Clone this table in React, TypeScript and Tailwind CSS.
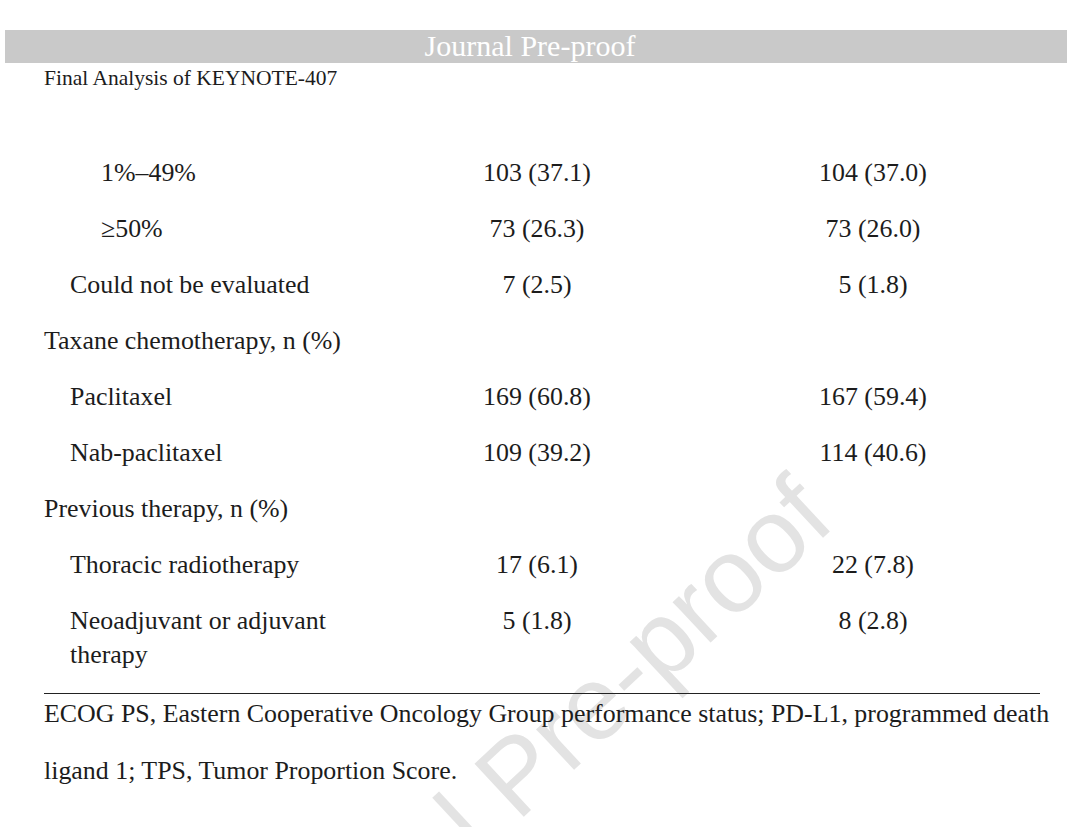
const ROWS: { label: string; level: number; a?: string; b?: string }[] = [
  { label: '1%–49%', level: 2, a: '103 (37.1)', b: '104 (37.0)' },
  { label: '≥50%', level: 2, a: '73 (26.3)', b: '73 (26.0)' },
  { label: 'Could not be evaluated', level: 1, a: '7 (2.5)', b: '5 (1.8)' },
  { label: 'Taxane chemotherapy, n (%)', level: 0 },
  { label: 'Paclitaxel', level: 1, a: '169 (60.8)', b: '167 (59.4)' },
  { label: 'Nab-paclitaxel', level: 1, a: '109 (39.2)', b: '114 (40.6)' },
  { label: 'Previous therapy, n (%)', level: 0 },
  { label: 'Thoracic radiotherapy', level: 1, a: '17 (6.1)', b: '22 (7.8)' },
  { label: 'Neoadjuvant or adjuvant therapy', level: 1, a: '5 (1.8)', b: '8 (2.8)' },
]

const INDENT = ['pl-0', 'pl-[26px]', 'pl-[57px]']

export default function App() {
  return (
    <div className="relative h-[827px] overflow-hidden bg-white text-[#1c1c1c] font-['Liberation_Serif','Times_New_Roman',serif]">
      {/* watermark, sits behind the page text */}
      <div className="pointer-events-none absolute left-[516px] top-[774px] -translate-x-1/2 -translate-y-1/2 -rotate-[43deg] whitespace-nowrap text-[105px] leading-none text-[#e3e3e3] font-['Liberation_Sans',Arial,sans-serif]">
        Journal Pre-proof
      </div>

      <div className="relative">
        {/* running header */}
        <div className="pt-[30px] pl-[5px]">
          <div className="h-[33px] bg-[#c9c9c9] flex items-center justify-center pr-[12px]">
            <span className="text-white text-[30px] leading-none -mt-[2px]">Journal Pre-proof</span>
          </div>
        </div>
        <div className="pl-[44px] pt-[3px] text-[21.5px] leading-[24px]">Final Analysis of KEYNOTE-407</div>

        {/* table body */}
        <div className="mt-[55px] px-[44px] text-[25.9px] leading-[34px]">
          {ROWS.map(row => (
            <div key={row.label} className="grid grid-cols-[326px_334px_338px] py-[11px]">
              <div className={`${INDENT[row.level]} pr-[20px]`}>{row.label}</div>
              <div className="text-center">{row.a}</div>
              <div className="text-center">{row.b}</div>
            </div>
          ))}
          <div className="mt-[10px] border-t border-[#222] w-[996px]" />
          <p className="-mt-[9px] leading-[57px] w-[1010px]">
            ECOG PS, Eastern Cooperative Oncology Group performance status; PD-L1, programmed death ligand 1; TPS, Tumor Proportion Score.
          </p>
        </div>
      </div>
    </div>
  )
}
